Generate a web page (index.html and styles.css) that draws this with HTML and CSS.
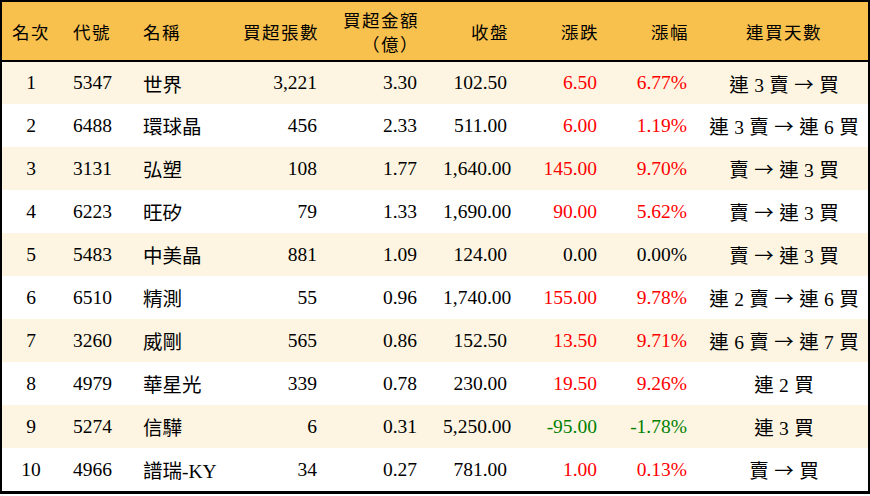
FILE: index.html
```html
<!DOCTYPE html>
<html lang="zh-Hant">
<head>
<meta charset="utf-8">
<title>買超排行</title>
<link rel="stylesheet" href="styles.css">
</head>
<body>
<div class="frame">
<table class="rank">
<colgroup>
<col class="c-rank"><col class="c-code"><col class="c-name"><col class="c-vol"><col class="c-amt"><col class="c-close"><col class="c-chg"><col class="c-pct"><col class="c-days">
</colgroup>
<thead>
<tr>
<th class="ctr">名次</th>
<th class="lft">代號</th>
<th class="lft">名稱</th>
<th class="rgt">買超張數</th>
<th class="rgt two">買超金額<br>（億）</th>
<th class="rgt">收盤</th>
<th class="rgt">漲跌</th>
<th class="rgt">漲幅</th>
<th class="ctr">連買天數</th>
</tr>
</thead>
<tbody>
<tr class="odd"><td class="ctr">1</td><td class="lft">5347</td><td class="lft">世界</td><td class="rgt">3,221</td><td class="rgt">3.30</td><td class="rgt">102.50</td><td class="rgt up">6.50</td><td class="rgt up">6.77%</td><td class="ctr days">連 3 賣 <span class="arw">→</span> 買</td></tr>
<tr><td class="ctr">2</td><td class="lft">6488</td><td class="lft">環球晶</td><td class="rgt">456</td><td class="rgt">2.33</td><td class="rgt">511.00</td><td class="rgt up">6.00</td><td class="rgt up">1.19%</td><td class="ctr days">連 3 賣 <span class="arw">→</span> 連 6 買</td></tr>
<tr class="odd"><td class="ctr">3</td><td class="lft">3131</td><td class="lft">弘塑</td><td class="rgt">108</td><td class="rgt">1.77</td><td class="rgt">1,640.00</td><td class="rgt up">145.00</td><td class="rgt up">9.70%</td><td class="ctr days">賣 <span class="arw">→</span> 連 3 買</td></tr>
<tr><td class="ctr">4</td><td class="lft">6223</td><td class="lft">旺矽</td><td class="rgt">79</td><td class="rgt">1.33</td><td class="rgt">1,690.00</td><td class="rgt up">90.00</td><td class="rgt up">5.62%</td><td class="ctr days">賣 <span class="arw">→</span> 連 3 買</td></tr>
<tr class="odd"><td class="ctr">5</td><td class="lft">5483</td><td class="lft">中美晶</td><td class="rgt">881</td><td class="rgt">1.09</td><td class="rgt">124.00</td><td class="rgt">0.00</td><td class="rgt">0.00%</td><td class="ctr days">賣 <span class="arw">→</span> 連 3 買</td></tr>
<tr><td class="ctr">6</td><td class="lft">6510</td><td class="lft">精測</td><td class="rgt">55</td><td class="rgt">0.96</td><td class="rgt">1,740.00</td><td class="rgt up">155.00</td><td class="rgt up">9.78%</td><td class="ctr days">連 2 賣 <span class="arw">→</span> 連 6 買</td></tr>
<tr class="odd"><td class="ctr">7</td><td class="lft">3260</td><td class="lft">威剛</td><td class="rgt">565</td><td class="rgt">0.86</td><td class="rgt">152.50</td><td class="rgt up">13.50</td><td class="rgt up">9.71%</td><td class="ctr days">連 6 賣 <span class="arw">→</span> 連 7 買</td></tr>
<tr><td class="ctr">8</td><td class="lft">4979</td><td class="lft">華星光</td><td class="rgt">339</td><td class="rgt">0.78</td><td class="rgt">230.00</td><td class="rgt up">19.50</td><td class="rgt up">9.26%</td><td class="ctr days">連 2 買</td></tr>
<tr class="odd"><td class="ctr">9</td><td class="lft">5274</td><td class="lft">信驊</td><td class="rgt">6</td><td class="rgt">0.31</td><td class="rgt">5,250.00</td><td class="rgt down">-95.00</td><td class="rgt down">-1.78%</td><td class="ctr days">連 3 買</td></tr>
<tr><td class="ctr">10</td><td class="lft">4966</td><td class="lft">譜瑞-KY</td><td class="rgt">34</td><td class="rgt">0.27</td><td class="rgt">781.00</td><td class="rgt up">1.00</td><td class="rgt up">0.13%</td><td class="ctr days">賣 <span class="arw">→</span> 買</td></tr>
</tbody>
</table>
</div>
</body>
</html>
```

FILE: styles.css
```css
html, body {
  margin: 0;
  padding: 0;
  background: #ffffff;
}

.frame {
  width: 866px;
  border-style: solid;
  border-color: #000;
  border-width: 2px 2px 3px 2px;
  background: #fff;
}

.rank {
  width: 866px;
  table-layout: fixed;
  border-collapse: collapse;
  font-family: "Liberation Serif", "Noto Sans CJK TC", serif;
  font-size: 19.5px;
  color: #000;
}

.c-rank { width: 58px; }
.c-code { width: 70px; }
.c-name { width: 90px; }
.c-vol { width: 110px; }
.c-amt { width: 100px; }
.c-close { width: 90px; }
.c-chg { width: 90px; }
.c-pct { width: 90px; }
.c-days { width: 168px; }

.rank thead tr {
  background: #f8c14e;
  height: 59px;
}

.rank th {
  font-weight: normal;
  font-family: "Noto Sans CJK TC", sans-serif;
  font-size: 17.5px;
  letter-spacing: 1.5px;
  padding: 0 13px;
  vertical-align: middle;
  border-bottom: 2px solid #000;
  white-space: nowrap;
}

.rank th.two {
  line-height: 24px;
  padding-top: 2px;
}

.rank th.rgt { padding-right: 11px; }

.rank tbody tr {
  height: 43px;
  background: #ffffff;
}

.rank tbody tr.odd {
  background: #fdf5e2;
}

.rank td {
  padding: 0 13px;
  vertical-align: middle;
  white-space: nowrap;
}

.ctr { text-align: center; }
.lft { text-align: left; }
.rgt { text-align: right; }

.rank th.ctr, .rank td.ctr { padding: 0 4px; }

.rank td.days {
  word-spacing: 0.5px;
}

.up { color: #ff0000; }
.down { color: #008000; }

.arw {
  font-family: "Noto Sans CJK TC", sans-serif;
}
```
